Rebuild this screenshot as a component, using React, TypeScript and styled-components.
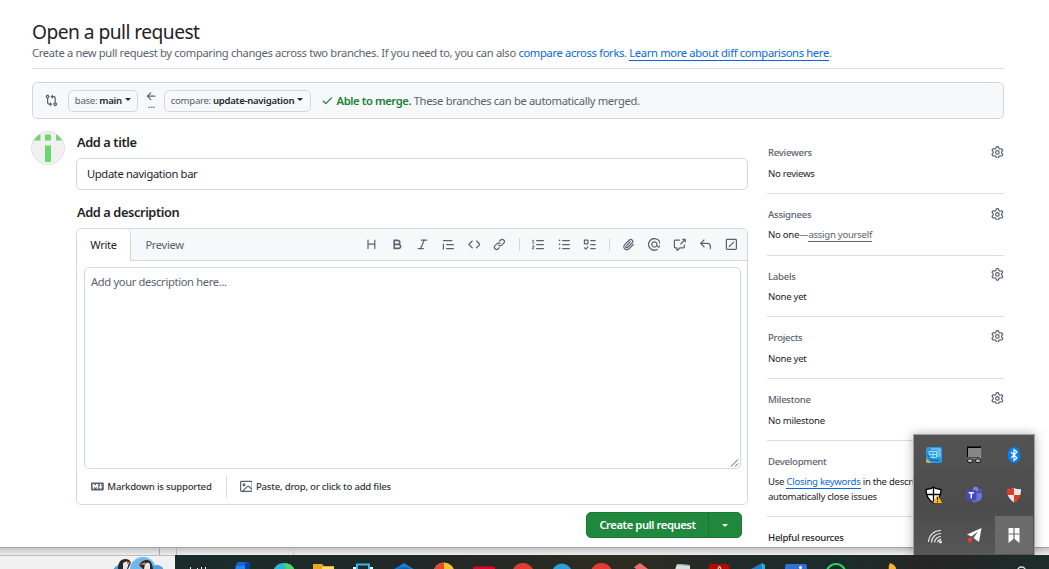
import React from 'react';
import styled, { createGlobalStyle } from 'styled-components';

const GlobalStyle = createGlobalStyle`
  *, *::before, *::after { box-sizing: border-box; }
  body {
    margin: 0;
    background: #fff;
    color: #1f2328;
    font-family: "Noto Sans", "Open Sans", sans-serif;
    font-size: 11.2px;
    letter-spacing: -0.35px;
    overflow: hidden;
  }
`;

const paths = {
  heading: 'M3.75 2a.75.75 0 0 1 .75.75V7h7V2.75a.75.75 0 0 1 1.5 0v10.5a.75.75 0 0 1-1.5 0V8.5h-7v4.75a.75.75 0 0 1-1.5 0V2.75A.75.75 0 0 1 3.75 2Z',
  bold: 'M4 2h4.5a3.501 3.501 0 0 1 2.852 5.53A3.499 3.499 0 0 1 9.5 14H4a1 1 0 0 1-1-1V3a1 1 0 0 1 1-1Zm1 7v3h4.5a1.5 1.5 0 0 0 0-3Zm3.5-2a1.5 1.5 0 0 0 0-3H5v3Z',
  italic: 'M6 2.75A.75.75 0 0 1 6.75 2h6.5a.75.75 0 0 1 0 1.5h-2.505l-3.858 9H9.25a.75.75 0 0 1 0 1.5h-6.5a.75.75 0 0 1 0-1.5h2.505l3.858-9H6.75A.75.75 0 0 1 6 2.75Z',
  quote: 'M1.75 2.5h10.5a.75.75 0 0 1 0 1.5H1.75a.75.75 0 0 1 0-1.5Zm4 5h8.5a.75.75 0 0 1 0 1.5h-8.5a.75.75 0 0 1 0-1.5Zm0 5h8.5a.75.75 0 0 1 0 1.5h-8.5a.75.75 0 0 1 0-1.5ZM2.5 7.75v6a.75.75 0 0 1-1.5 0v-6a.75.75 0 0 1 1.5 0Z',
  code: 'm11.28 3.22 4.25 4.25a.75.75 0 0 1 0 1.06l-4.25 4.25a.749.749 0 0 1-1.275-.326.749.749 0 0 1 .215-.734L13.94 8l-3.72-3.72a.749.749 0 0 1 .326-1.275.749.749 0 0 1 .734.215Zm-6.56 0a.751.751 0 0 1 1.042.018.751.751 0 0 1 .018 1.042L2.06 8l3.72 3.72a.749.749 0 0 1-.326 1.275.749.749 0 0 1-.734-.215L.47 8.53a.75.75 0 0 1 0-1.06Z',
  link: 'm7.775 3.275 1.25-1.25a3.5 3.5 0 1 1 4.95 4.95l-2.5 2.5a3.5 3.5 0 0 1-4.95 0 .751.751 0 0 1 .018-1.042.751.751 0 0 1 1.042-.018 1.998 1.998 0 0 0 2.83 0l2.5-2.5a2.002 2.002 0 0 0-2.83-2.83l-1.25 1.25a.751.751 0 0 1-1.042-.018.751.751 0 0 1-.018-1.042Zm-4.69 9.64a1.998 1.998 0 0 0 2.83 0l1.25-1.25a.751.751 0 0 1 1.042.018.751.751 0 0 1 .018 1.042l-1.25 1.25a3.5 3.5 0 1 1-4.95-4.95l2.5-2.5a3.5 3.5 0 0 1 4.95 0 .751.751 0 0 1-.018 1.042.751.751 0 0 1-1.042.018 1.998 1.998 0 0 0-2.83 0l-2.5 2.5a1.998 1.998 0 0 0 0 2.83Z',
  ordered: 'M5 3.25a.75.75 0 0 1 .75-.75h8.5a.75.75 0 0 1 0 1.5h-8.5A.75.75 0 0 1 5 3.25Zm0 5a.75.75 0 0 1 .75-.75h8.5a.75.75 0 0 1 0 1.5h-8.5A.75.75 0 0 1 5 8.25Zm0 5a.75.75 0 0 1 .75-.75h8.5a.75.75 0 0 1 0 1.5h-8.5a.75.75 0 0 1-.75-.75ZM.924 10.32a.5.5 0 0 1-.851-.525l.001-.001.001-.002.002-.004.007-.011c.097-.144.215-.273.348-.384.228-.19.588-.392 1.068-.392.468 0 .858.181 1.126.484.259.294.377.673.377 1.038 0 .987-.686 1.495-1.156 1.845l-.047.035c-.303.225-.522.4-.654.597h1.357a.5.5 0 0 1 0 1H.5a.5.5 0 0 1-.5-.5c0-1.005.692-1.52 1.167-1.875l.035-.025c.531-.396.8-.625.8-1.078a.57.57 0 0 0-.128-.376C1.806 10.068 1.695 10 1.5 10a.658.658 0 0 0-.429.163.835.835 0 0 0-.144.153ZM2.003 2.5V6h.503a.5.5 0 0 1 0 1H.5a.5.5 0 0 1 0-1h.503V3.308l-.28.14a.5.5 0 0 1-.446-.895l1.003-.5a.5.5 0 0 1 .723.447Z',
  unordered: 'M5.75 2.5h8.5a.75.75 0 0 1 0 1.5h-8.5a.75.75 0 0 1 0-1.5Zm0 5h8.5a.75.75 0 0 1 0 1.5h-8.5a.75.75 0 0 1 0-1.5Zm0 5h8.5a.75.75 0 0 1 0 1.5h-8.5a.75.75 0 0 1 0-1.5ZM2 14a1 1 0 1 1 0-2 1 1 0 0 1 0 2Zm1-6a1 1 0 1 1-2 0 1 1 0 0 1 2 0ZM2 4a1 1 0 1 1 0-2 1 1 0 0 1 0 2Z',
  tasklist: 'M2 2h4a1 1 0 0 1 1 1v4a1 1 0 0 1-1 1H2a1 1 0 0 1-1-1V3a1 1 0 0 1 1-1Zm4.655 8.595a.75.75 0 0 1 0 1.06L4.03 14.28a.75.75 0 0 1-1.06 0l-1.5-1.5a.749.749 0 0 1 .326-1.275.749.749 0 0 1 .734.215l.97.97 2.095-2.095a.75.75 0 0 1 1.06 0ZM9.75 2.5h5.5a.75.75 0 0 1 0 1.5h-5.5a.75.75 0 0 1 0-1.5Zm0 5h5.5a.75.75 0 0 1 0 1.5h-5.5a.75.75 0 0 1 0-1.5Zm0 5h5.5a.75.75 0 0 1 0 1.5h-5.5a.75.75 0 0 1 0-1.5Zm-7.25-9v3h3v-3Z',
  clip: 'M12.212 3.02a1.753 1.753 0 0 0-2.478.003l-5.83 5.83a3.007 3.007 0 0 0-.88 2.127c0 .795.315 1.551.88 2.116.567.567 1.333.89 2.126.89.79 0 1.548-.321 2.116-.89l5.48-5.48a.75.75 0 0 1 1.061 1.06l-5.48 5.48a4.492 4.492 0 0 1-3.177 1.33c-1.2 0-2.345-.487-3.187-1.33a4.483 4.483 0 0 1-1.32-3.177c0-1.195.475-2.341 1.32-3.186l5.83-5.83a3.25 3.25 0 0 1 5.553 2.297c0 .863-.343 1.691-.953 2.301L7.439 12.39c-.375.377-.884.59-1.416.593a1.998 1.998 0 0 1-1.412-.593 1.992 1.992 0 0 1 0-2.828l5.48-5.48a.751.751 0 0 1 1.042.018.751.751 0 0 1 .018 1.042l-5.48 5.48a.492.492 0 0 0 0 .707.499.499 0 0 0 .352.154.51.51 0 0 0 .356-.154l5.833-5.827a1.755 1.755 0 0 0 0-2.481Z',
  mention: 'M4.75 2.37a6.501 6.501 0 0 0 6.5 11.26.75.75 0 0 1 .75 1.298A7.999 7.999 0 0 1 .989 4.148 8 8 0 0 1 16 7.75v1.5a2.75 2.75 0 0 1-5.072 1.475 3.999 3.999 0 0 1-6.65-4.19A4 4 0 0 1 12 8v1.25a1.25 1.25 0 0 0 2.5 0V7.867a6.5 6.5 0 0 0-9.75-5.496ZM10.5 8a2.5 2.5 0 1 0-5 0 2.5 2.5 0 0 0 5 0Z',
  crossref: 'M2.75 3.5a.25.25 0 0 0-.25.25v7.5c0 .138.112.25.25.25h2a.75.75 0 0 1 .75.75v2.19l2.72-2.72a.749.749 0 0 1 .53-.22h4.5a.25.25 0 0 0 .25-.25v-2.5a.75.75 0 0 1 1.5 0v2.5A1.75 1.75 0 0 1 13.25 13H9.06l-2.573 2.573A1.458 1.458 0 0 1 4 14.543V13H2.75A1.75 1.75 0 0 1 1 11.25v-7.5C1 2.784 1.784 2 2.75 2h5.5a.75.75 0 0 1 0 1.5ZM16 1.25v4.146a.25.25 0 0 1-.427.177L14.03 4.03l-3.75 3.75a.749.749 0 0 1-1.275-.326.749.749 0 0 1 .215-.734l3.75-3.75-1.543-1.543A.25.25 0 0 1 11.604 1h4.146a.25.25 0 0 1 .25.25Z',
  reply: 'M6.78 1.97a.75.75 0 0 1 0 1.06L3.81 6h6.44A4.75 4.75 0 0 1 15 10.75v2.5a.75.75 0 0 1-1.5 0v-2.5a3.25 3.25 0 0 0-3.25-3.25H3.81l2.97 2.97a.749.749 0 0 1-.326 1.275.749.749 0 0 1-.734-.215L1.47 7.28a.75.75 0 0 1 0-1.06l4.25-4.25a.75.75 0 0 1 1.06 0Z',
  slash: 'M13.25 1c.966 0 1.75.784 1.75 1.75v10.5A1.75 1.75 0 0 1 13.25 15H2.75A1.75 1.75 0 0 1 1 13.25V2.75C1 1.784 1.784 1 2.75 1ZM2.75 2.5a.25.25 0 0 0-.25.25v10.5c0 .138.112.25.25.25h10.5a.25.25 0 0 0 .25-.25V2.75a.25.25 0 0 0-.25-.25Zm8.53 3.28-5.5 5.5a.749.749 0 0 1-1.275-.326.749.749 0 0 1 .215-.734l5.5-5.5a.749.749 0 0 1 1.06 1.06Z',
  compare: 'M9.573.677A.25.25 0 0 1 10 .854V2.5h1A2.5 2.5 0 0 1 13.5 5v5.628a2.251 2.251 0 1 1-1.5 0V5a1 1 0 0 0-1-1h-1v1.646a.25.25 0 0 1-.427.177L7.177 3.427a.25.25 0 0 1 0-.354ZM6 12v-1.646a.25.25 0 0 1 .427-.177l2.396 2.396a.25.25 0 0 1 0 .354l-2.396 2.396A.25.25 0 0 1 6 15.146V13.5H5A2.5 2.5 0 0 1 2.5 11V5.372a2.25 2.25 0 1 1 1.5 0V11a1 1 0 0 0 1 1ZM4 3.25a.75.75 0 1 0-1.5 0 .75.75 0 0 0 1.5 0ZM12.75 12a.75.75 0 1 0 0 1.5.75.75 0 0 0 0-1.5Z',
  left: 'M7.78 12.53a.75.75 0 0 1-1.06 0L2.47 8.28a.75.75 0 0 1 0-1.06l4.25-4.25a.751.751 0 0 1 1.042.018.751.751 0 0 1 .018 1.042L4.81 7h7.44a.75.75 0 0 1 0 1.5H4.81l2.97 2.97a.75.75 0 0 1 0 1.06Z',
  check: 'M13.78 4.22a.75.75 0 0 1 0 1.06l-7.25 7.25a.75.75 0 0 1-1.06 0L2.22 9.28a.751.751 0 0 1 .018-1.042.751.751 0 0 1 1.042-.018L6 10.94l6.72-6.72a.75.75 0 0 1 1.06 0Z',
  gear: 'M8 0a8.2 8.2 0 0 1 .701.031C9.444.095 9.99.645 10.16 1.29l.288 1.107c.018.066.079.158.212.224.231.114.454.243.668.386.123.082.233.09.299.071l1.103-.303c.644-.176 1.392.021 1.82.63.27.385.506.792.704 1.218.315.675.111 1.422-.364 1.891l-.814.806c-.049.048-.098.147-.088.294.016.257.016.515 0 .772-.01.147.038.246.088.294l.814.806c.475.469.679 1.216.364 1.891a7.977 7.977 0 0 1-.704 1.217c-.428.61-1.176.807-1.82.63l-1.102-.302c-.067-.019-.177-.011-.3.071a5.909 5.909 0 0 1-.668.386c-.133.066-.194.158-.211.224l-.29 1.106c-.168.646-.715 1.196-1.458 1.26a8.006 8.006 0 0 1-1.402 0c-.743-.064-1.289-.614-1.458-1.26l-.289-1.106c-.018-.066-.079-.158-.212-.224a5.738 5.738 0 0 1-.668-.386c-.123-.082-.233-.09-.299-.071l-1.103.303c-.644.176-1.392-.021-1.82-.63a8.12 8.12 0 0 1-.704-1.218c-.315-.675-.111-1.422.363-1.891l.815-.806c.05-.048.098-.147.088-.294a6.214 6.214 0 0 1 0-.772c.01-.147-.038-.246-.088-.294l-.815-.806C.635 6.045.431 5.298.746 4.623a7.92 7.92 0 0 1 .704-1.217c.428-.61 1.176-.807 1.82-.63l1.102.302c.067.019.177.011.3-.071.214-.143.437-.272.668-.386.133-.066.194-.158.211-.224l.29-1.106C6.009.645 6.556.095 7.299.03 7.53.01 7.764 0 8 0Zm-.571 1.525c-.036.003-.108.036-.137.146l-.289 1.105c-.147.561-.549.967-.998 1.189-.173.086-.34.183-.5.29-.417.278-.97.423-1.529.27l-1.103-.303c-.109-.03-.175.016-.195.045-.22.312-.412.644-.573.99-.014.031-.021.11.059.19l.815.806c.411.406.562.957.53 1.456a4.709 4.709 0 0 0 0 .582c.032.499-.119 1.05-.53 1.456l-.815.806c-.081.08-.073.159-.059.19.162.346.353.677.573.989.02.03.085.076.195.046l1.102-.303c.56-.153 1.113-.008 1.53.27.161.107.328.204.501.29.447.222.85.629.997 1.189l.289 1.105c.029.109.101.143.137.146a6.6 6.6 0 0 0 1.142 0c.036-.003.108-.036.137-.146l.289-1.105c.147-.561.549-.967.998-1.189.173-.086.34-.183.5-.29.417-.278.97-.423 1.529-.27l1.103.303c.109.029.175-.016.195-.045.22-.313.411-.644.573-.99.014-.031.021-.11-.059-.19l-.815-.806c-.411-.406-.562-.957-.53-1.456a4.709 4.709 0 0 0 0-.582c-.032-.499.119-1.05.53-1.456l.815-.806c.081-.08.073-.159.059-.19a6.464 6.464 0 0 0-.573-.989c-.02-.03-.085-.076-.195-.046l-1.102.303c-.56.153-1.113.008-1.53-.27a4.44 4.44 0 0 0-.501-.29c-.447-.222-.85-.629-.997-1.189l-.289-1.105c-.029-.11-.101-.143-.137-.146a6.6 6.6 0 0 0-1.142 0ZM11 8a3 3 0 1 1-6 0 3 3 0 0 1 6 0ZM9.5 8a1.5 1.5 0 1 0-3.001.001A1.5 1.5 0 0 0 9.5 8Z',
  markdown: 'M14.85 3c.63 0 1.15.52 1.14 1.15v7.7c0 .63-.51 1.15-1.15 1.15H1.15C.52 13 0 12.48 0 11.84V4.15C0 3.52.52 3 1.15 3ZM9 11V5H7L5.5 7 4 5H2v6h2V8l1.5 1.92L7 8v3Zm2.99.5L14.5 8H13V5h-2v3H9.5Z',
  image: 'M16 13.25A1.75 1.75 0 0 1 14.25 15H1.75A1.75 1.75 0 0 1 0 13.25V2.75C0 1.784.784 1 1.75 1h12.5c.966 0 1.75.784 1.75 1.75ZM1.75 2.5a.25.25 0 0 0-.25.25v10.5c0 .138.112.25.25.25h.94l.03-.03 6.077-6.078a1.75 1.75 0 0 1 2.412-.06L14.5 10.31V2.75a.25.25 0 0 0-.25-.25Zm12.5 11a.25.25 0 0 0 .25-.25v-.917l-4.298-3.889a.25.25 0 0 0-.344.009L4.81 13.5ZM7 6a2 2 0 1 1-3.999.001A2 2 0 0 1 7 6ZM5.5 6a.5.5 0 1 0-1 0 .5.5 0 0 0 1 0Z',
};

type IconName = keyof typeof paths;

const Svg = styled.svg`
  display: block;
  flex: none;
  fill: currentColor;
`;

const Icon = ({ name, size = 12.8 }: { name: IconName; size?: number }) => (
  <Svg width={size} height={size} viewBox="0 0 16 16">
    <path d={paths[name]} />
  </Svg>
);

const Screen = styled.div`
  position: relative;
  display: flex;
  flex-direction: column;
  width: 1049px;
  height: 569px;
  overflow: hidden;
`;

const Page = styled.main`
  height: 547px;
  padding: 20px 45px 0 32px;
  overflow: hidden;
  white-space: nowrap;
`;

const Header = styled.header`
  height: 49px;
  border-bottom: 1px solid #d8dee4;
`;

const PageTitle = styled.h1`
  margin: 0;
  font-size: 19.2px;
  font-weight: 400;
  line-height: 24px;
  letter-spacing: -0.54px;
`;

const Subtitle = styled.p`
  margin: 1px 0 0;
  color: #59636e;
  line-height: 16px;
  letter-spacing: -0.337px;
`;

const Link = styled.a<{ $underlined?: boolean; $muted?: boolean }>`
  color: ${(p) => (p.$muted ? '#59636e' : '#0969da')};
  border-bottom: ${(p) => (p.$underlined ? '1px solid currentColor' : '0')};
`;

const MergeBar = styled.section`
  display: flex;
  align-items: center;
  width: 972px;
  height: 37px;
  margin-top: 13px;
  padding-left: 12px;
  border: 1px solid #d1d9e0;
  border-radius: 5px;
  background: #f6f8fa;
  color: #59636e;
`;

const BranchButton = styled.button<{ $width: number }>`
  display: flex;
  align-items: center;
  width: ${(p) => p.$width}px;
  height: 22px;
  padding: 0 0 0 6px;
  border: 1px solid #d1d9e0;
  border-radius: 5px;
  background: #f6f8fa;
  color: #59636e;
  font-family: inherit;
  font-size: 9.6px;
  letter-spacing: -0.3px;
  white-space: pre;

  b {
    color: #25292e;
    font-weight: 600;
  }
`;

const Caret = styled.i<{ $light?: boolean }>`
  width: 0;
  height: 0;
  margin: -2px 0 0 3px;
  border: 3.4px solid transparent;
  border-top-color: ${(p) => (p.$light ? '#fff' : '#25292e')};
  border-bottom: 0;
`;

const CompareIcon = styled.span`
  margin: 0 10px 0 0;
`;

const Direction = styled.span`
  display: flex;
  flex-direction: column;
  align-items: center;
  width: 26px;
  height: 22px;
  padding-left: 1px;
`;

const Dots = styled.span`
  height: 8px;
  font-size: 9.6px;
  font-weight: 600;
  line-height: 6px;
`;

const MergeStatus = styled.p`
  display: flex;
  align-items: center;
  gap: 3px;
  margin: 0 0 0 10px;

  svg { color: #1a7f37; }

  b {
    color: #1a7f37;
    font-weight: 600;
    letter-spacing: -0.4px;
  }
`;

const Columns = styled.div`
  display: flex;
`;

const Avatar = styled.div`
  width: 34px;
  height: 34px;
  margin: 12px 11px 0 -1px;
  border: 1px solid #dfe2e5;
  border-radius: 50%;
  background: #f0f0f0;
  overflow: hidden;
`;

const Form = styled.form`
  width: 672px;
  padding-top: 15px;
`;

const FieldLabel = styled.h2`
  margin: 0;
  padding-left: 1px;
  font-size: 12.8px;
  font-weight: 600;
  line-height: 17px;
  letter-spacing: -0.4px;
`;

const TitleInput = styled.div`
  height: 32px;
  margin: 7px 0 14px;
  padding-left: 10px;
  border: 1px solid #d1d9e0;
  border-radius: 5px;
  line-height: 29px;
`;

const Editor = styled.section`
  display: flex;
  flex-direction: column;
  height: 277px;
  margin-top: 7px;
  border: 1px solid #d1d9e0;
  border-radius: 5px;
  overflow: hidden;
`;

const EditorHead = styled.div`
  display: flex;
  height: 32px;
  border-bottom: 1px solid #d1d9e0;
  background: #f6f8fa;
  color: #59636e;
`;

const Tab = styled.div<{ $active?: boolean }>`
  width: ${(p) => (p.$active ? 54 : 67)}px;
  height: ${(p) => (p.$active ? 32 : 31)}px;
  border-right: ${(p) => (p.$active ? '1px solid #d1d9e0' : '0')};
  border-radius: 5px 5px 0 0;
  background: ${(p) => (p.$active ? '#fff' : 'transparent')};
  color: ${(p) => (p.$active ? '#1f2328' : '#59636e')};
  line-height: 31px;
  text-align: center;
`;

const Toolbar = styled.div`
  display: flex;
  align-items: center;
  margin-left: auto;
  padding-right: 3px;
`;

const Tool = styled.span`
  display: grid;
  place-items: center;
  width: 25.7px;
`;

const ToolDivider = styled.span`
  width: 1px;
  height: 13px;
  margin: 0 6px;
  background: #d1d9e0;
`;

const TextArea = styled.div`
  display: flex;
  justify-content: space-between;
  height: 202px;
  margin: 6px 6px 0 7px;
  padding: 6px 1px 1px 6px;
  border: 1px solid #d1d9e0;
  border-radius: 5px;
  color: #59636e;
  line-height: 16px;
`;

const Grip = styled.svg`
  align-self: flex-end;
  display: block;
`;

const EditorFoot = styled.div`
  display: flex;
  align-items: center;
  flex: 1;
  padding-left: 14px;
  color: #59636e;
  font-size: 9.6px;
  font-weight: 500;
  letter-spacing: -0.22px;
`;

const FootItem = styled.span`
  display: flex;
  align-items: center;
  gap: 3.5px;

  span { color: #30363d; }
`;

const FootDivider = styled.span`
  width: 1px;
  height: 23px;
  margin: 0 13px 0 14px;
  background: #d8dee4;
`;

const Actions = styled.div`
  display: flex;
  justify-content: flex-end;
  padding: 7px 6px 0 0;
`;

const SubmitButton = styled.div`
  display: flex;
  width: 156px;
  height: 26px;
  border: 1px solid #1c7a35;
  border-radius: 5px;
  background: #1f883d;
  color: #fff;
  font-weight: 600;
  line-height: 24px;
  letter-spacing: -0.42px;
`;

const SubmitLabel = styled.span`
  width: 122px;
  border-right: 1px solid #1a7232;
  text-align: center;
`;

const SubmitMenu = styled.span`
  display: grid;
  flex: 1;
  place-items: center;
  padding: 2px 3px 0 0;
`;

const Sidebar = styled.aside`
  width: 237px;
  margin-left: 19px;
  padding-top: 13px;
  font-size: 9.6px;
  letter-spacing: -0.28px;
`;

const SideSection = styled.section<{ $height: number }>`
  height: ${(p) => p.$height}px;
  padding-top: 12px;
  padding-left: 1px;
  border-bottom: 1px solid #d8dee4;
`;

const SideHead = styled.div<{ $dark?: boolean; $gap?: number }>`
  display: flex;
  justify-content: space-between;
  height: 15px;
  margin-bottom: ${(p) => p.$gap ?? 6}px;
  color: ${(p) => (p.$dark ? '#1f2328' : '#59636e')};
  font-weight: 500;
  line-height: 17px;
`;

const GearSlot = styled.span<{ $drop: number }>`
  height: 13px;
  padding-top: ${(p) => p.$drop}px;
`;

const SideText = styled.div`
  height: 15px;
  line-height: 15px;
`;

const Behind = styled.div`
  display: flex;
  height: 8px;
  border-top: 1px solid #a3a3a3;
  background: linear-gradient(#c4c4c4, #eeeeee);
`;

const Seam = styled.i<{ $gap: number; $tone: string }>`
  width: 1px;
  margin-left: ${(p) => p.$gap}px;
  background: ${(p) => p.$tone};
`;

const Taskbar = styled.footer`
  display: flex;
  height: 14px;
  overflow: hidden;
  background: linear-gradient(90deg, #1b2b2b 0 20%, #222827 42%, #2d2c20 60%, #222a28 70%, #1b2c2b 80%, #272525 88%, #1c2c2b);
`;

const SearchBox = styled.div`
  width: 175px;
  border-top: 1px solid #bdbdbd;
  background: #f1f1f1;
`;

const TaskIcon = styled.svg`
  display: block;
  flex: none;
`;

const Tray = styled.div`
  position: absolute;
  top: 434px;
  left: 913px;
  width: 122px;
  height: 121px;
  display: grid;
  grid-template: repeat(3, 40px) / repeat(3, 40px);
  border: 1px solid #a0a0a0;
  border-bottom: 0;
  background: linear-gradient(#535353, #4c4c4c 60%, #575757);
  box-shadow: 0 0 10px rgba(0, 0, 0, 0.3);
  clip-path: inset(-14px -14px 0 -14px);
`;

const TrayCell = styled.div<{ $active?: boolean }>`
  display: grid;
  place-items: center;
  width: ${(p) => (p.$active ? 38 : 40)}px;
  height: ${(p) => (p.$active ? 38 : 40)}px;
  margin: ${(p) => (p.$active ? '1px' : '0')};
  background: ${(p) => (p.$active ? '#6b6b6b' : 'transparent')};
`;

const tools: (IconName | '|')[] = [
  'heading', 'bold', 'italic', 'quote', 'code', 'link', '|',
  'ordered', 'unordered', 'tasklist', '|',
  'clip', 'mention', 'crossref', 'reply', 'slash',
];

const sections: { title: string; body: React.ReactNode; height: number; gap: number; drop: number }[] = [
  { title: 'Reviewers', body: 'No reviews', height: 62, gap: 7, drop: 1.6 },
  { title: 'Assignees', body: <>No one—<Link $underlined $muted>assign yourself</Link></>, height: 62, gap: 6, drop: 1.6 },
  { title: 'Labels', body: 'None yet', height: 61, gap: 6, drop: 0 },
  { title: 'Projects', body: 'None yet', height: 62, gap: 7, drop: 0.6 },
  { title: 'Milestone', body: 'No milestone', height: 62, gap: 7, drop: 0.6 },
];

const taskIcons: React.ReactNode[] = [
  <><path d="M10 14q1-7 4-7h11v7z" fill="#1267d8" /><path d="M20 8l5-1v7h-5z" fill="#0a3d9e" /><path d="M11 11h9v4h-9z" fill="#2386f0" /></>,
  <><circle cx="19.7" cy="19" r="11" fill="#2bb6d8" /><path d="M20 8q9 0 11 8h-9z" fill="#4fd06a" /></>,
  <><path d="M9 9h9l2 2h10v5H9z" fill="#e8a91c" /><path d="M18 12h12v4H18z" fill="#f9d978" /></>,
  <><path d="M10 12h20v4H10z" fill="#e8f2f8" /><path d="M14 14V9.500h12V14" fill="#1d2b2c" stroke="#35b7ef" strokeWidth="2" /></>,
  <><path d="M10 15l11-7 11 7z" fill="#1283d9" /><path d="M10 13l12-1 9 3z" fill="#0a5fb4" /></>,
  <><circle cx="22" cy="18" r="10.5" fill="#f4c32d" /><path d="M22 7.500v10.500H11.500A10.500 10.500 0 0 1 22 7.500" fill="#e5492f" /></>,
  <rect x="12" y="11.500" width="22" height="6" rx="1.500" fill="#e4002b" />,
  <circle cx="22" cy="19" r="11" fill="#e23c2e" />,
  <circle cx="22" cy="18.500" r="10" fill="#2b9fdb" />,
  <circle cx="21.500" cy="19" r="11" fill="#e23c2e" />,
  <path d="M15 12l6-4 8 6H17z" fill="#f06a6f" />,
  <><path d="M19 9l13 1v5H17z" fill="#d6dfe0" /><path d="M19 9l13 1v1l-13-1z" fill="#8ba8b1" /></>,
  <><rect x="10.500" y="9" width="21" height="9" rx="3" fill="#b30b00" /><path d="M20 14l1.500-3 1.500 3" stroke="#fff" fill="none" /></>,
  <><path d="M14 14l11-6v7z" fill="#1b7fc4" /><path d="M25 8l3 2v5h-3z" fill="#2fa8ec" /></>,
  <><rect x="9" y="9" width="22" height="8" rx="2" fill="#2f6fd6" /><circle cx="24.500" cy="12.500" r="1.500" fill="#fff" /></>,
  <circle cx="20" cy="18.500" r="9.500" fill="none" stroke="#25d366" strokeWidth="2.200" />,
];

const trayIcons: React.ReactNode[] = [
  <><rect x="2" y="2" width="16" height="16" rx="2" fill="#2a9ae0" /><path d="M7 4h9v8M5 6.500h7.500v6H5zM9 6v7M5 9.500h7.500M14 5v7" fill="none" stroke="#a8dcf8" /><path d="M3.500 9l3 6 9 .5" fill="none" stroke="#0b6fb8" strokeWidth="1.500" /><path d="M2 13.500l6 4.500H4q-2 0-2-2z" fill="#b9b06a" /></>,
  <><path d="M3.500 2.500h13v10h-13z" fill="#868686" stroke="#000" /><path d="M3 2h14" stroke="#000" /><path d="M16.600 3v10H3.500" fill="none" stroke="#ddd" strokeWidth=".7" /><rect x="3.500" y="14" width="5" height="3.500" rx="1.500" fill="#b8b8b8" stroke="#000" strokeWidth=".8" /><rect x="11.500" y="14" width="5" height="3.500" rx="1.500" fill="#b8b8b8" stroke="#000" strokeWidth=".8" /></>,
  <><rect x="4" y="2" width="12" height="16" rx="6" fill="#0a7cf2" /><path d="M7 7l6 6-3 2.500v-11L13 7l-6 6" fill="none" stroke="#fff" strokeWidth="1.200" /></>,
  <><path d="M9.500 2l2 1.500 5.500 1q0 9-7.500 13.500Q2 13.500 2 4.500l5.500-1z" fill="#fff" stroke="#000" strokeWidth="1.300" /><path d="M9.500 2v16M2 9.500h15" stroke="#000" strokeWidth="1.300" /><path d="M13.500 9.500l4.500 8.500H9z" fill="#fdb913" /><path d="M13.500 12v3M13.500 16v1.200" stroke="#222" strokeWidth="1.100" /></>,
  <><circle cx="11.500" cy="4.500" r="2.700" fill="#7b83eb" /><circle cx="16" cy="5.500" r="2" fill="#5059c9" /><path d="M7 8h11v4q-1 4-4 4-2 2-5 1-2-1-2-4z" fill="#6b73dd" /><rect x="2" y="5" width="10.500" height="10.500" rx="1" fill="#434bb8" /><path d="M4.700 7.700h5.200M7.300 7.700v5.500" stroke="#fff" strokeWidth="1.400" /></>,
  <><path d="M10 3q3 1.500 7 1 .5 9-7 13.500Q2.500 13 3 4q4 .5 7-1" fill="#e9e9e9" /><path d="M10 3v7H3.200Q2.800 7 3 4q4 .5 7-1M10 10h6.800q-1.300 5-6.800 7.500z" fill="#dd3b24" /></>,
  <g fill="none" stroke="#e8e8e8" strokeWidth="1.200"><path d="M4.500 17A12 12 0 0 1 17 5.500M7.500 17.500A9 9 0 0 1 17 8.500M10.500 17.500a6.500 6.500 0 0 1 6.500-6M13.500 17.500a4 4 0 0 1 3.500-3.200" /><circle cx="16.500" cy="17" r=".8" fill="#fff" /></g>,
  <><path d="M17.500 3L3 9.500l4.500 2L14 6.500 9.500 13l5.500 4z" fill="#fff" /><circle cx="6" cy="15" r="2.300" fill="#ee3a34" /></>,
  <><path d="M4.500 3h11v15L10 13.500 4.500 18z" fill="#fff" /><path d="M10 3v11M4.500 9h11" stroke="#6b6b6b" strokeWidth="1.200" /></>,
];

export default function App() {
  return (
    <>
      <GlobalStyle />
      <Screen>
        <Page>
          <Header>
            <PageTitle>Open a pull request</PageTitle>
            <Subtitle>
              Create a new pull request by comparing changes across two branches. If you need to, you can also{' '}
              <Link>compare across forks</Link>. <Link $underlined>Learn more about diff comparisons here</Link>.
            </Subtitle>
          </Header>

          <MergeBar>
            <CompareIcon><Icon name="compare" /></CompareIcon>
            <BranchButton $width={70}>base: <b>main</b><Caret /></BranchButton>
            <Direction><Icon name="left" /><Dots>...</Dots></Direction>
            <BranchButton $width={147}>compare: <b>update-navigation</b><Caret /></BranchButton>
            <MergeStatus>
              <Icon name="check" />
              <span><b>Able to merge.</b> These branches can be automatically merged.</span>
            </MergeStatus>
          </MergeBar>

          <Columns>
            <Avatar>
              <svg width="32" height="32" viewBox="0 0 32 32" fill="#6bd76e">
                <path d="M0 2.500h8.500v6H0zM13 2.500h6v6h-6zM24 2.500h8v6h-8zM13 13.500h6V30h-6z" />
              </svg>
            </Avatar>
            <Form>
              <FieldLabel>Add a title</FieldLabel>
              <TitleInput>Update navigation bar</TitleInput>
              <FieldLabel>Add a description</FieldLabel>
              <Editor>
                <EditorHead>
                  <Tab $active>Write</Tab>
                  <Tab>Preview</Tab>
                  <Toolbar>
                    {tools.map((t, i) =>
                      t === '|' ? <ToolDivider key={i} /> : <Tool key={i}><Icon name={t} /></Tool>,
                    )}
                  </Toolbar>
                </EditorHead>
                <TextArea>
                  Add your description here...
                  <Grip width="9" height="9" viewBox="0 0 9 9" stroke="#555" fill="none">
                    <path d="M1 8.500l7-7M5 8.500L8 5.500" />
                  </Grip>
                </TextArea>
                <EditorFoot>
                  <FootItem><Icon name="markdown" /><span>Markdown is supported</span></FootItem>
                  <FootDivider />
                  <FootItem><Icon name="image" /><span>Paste, drop, or click to add files</span></FootItem>
                </EditorFoot>
              </Editor>
              <Actions>
                <SubmitButton>
                  <SubmitLabel>Create pull request</SubmitLabel>
                  <SubmitMenu><Caret $light /></SubmitMenu>
                </SubmitButton>
              </Actions>
            </Form>
            <Sidebar>
              {sections.map((s) => (
                <SideSection key={s.title} $height={s.height}>
                  <SideHead $gap={s.gap}>
                    {s.title}
                    <GearSlot $drop={s.drop}><Icon name="gear" /></GearSlot>
                  </SideHead>
                  <SideText>{s.body}</SideText>
                </SideSection>
              ))}
              <SideSection $height={76}>
                <SideHead>Development</SideHead>
                <SideText>Use <Link $underlined>Closing keywords</Link> in the description to</SideText>
                <SideText>automatically close issues</SideText>
              </SideSection>
              <SideSection $height={40}>
                <SideHead $dark>Helpful resources</SideHead>
              </SideSection>
            </Sidebar>
          </Columns>
        </Page>

        <Behind>
          <Seam $gap={159} $tone="#a0a0a0" />
          <Seam $gap={16} $tone="#a9b8c4" />
          <Seam $gap={116} $tone="#c8c8c8" />
        </Behind>
        <Taskbar>
          <SearchBox>
            <TaskIcon width="175" height="13" viewBox="0 0 175 13">
              <circle cx="143" cy="14" r="13" fill="#6db9ee" />
              <circle cx="120" cy="16" r="7" fill="#4f9fdc" />
              <circle cx="157" cy="16" r="7" fill="#4f9fdc" />
              <path d="M118 13q0-10 7-10 5 0 6 4l-3 6z" fill="#26262c" />
              <path d="M139 9q3-5 8-5 5 0 6 9h-10z" fill="#26262c" />
              <path d="M123 7q4-3 6 0l-2 6h-4zM145 8q3-3 5 0v5h-6z" fill="#e8e4e0" />
              <path d="M127 5.500l5 1.500-5 1zM145 6l-6 2.500 6 .5z" fill="#e2703c" />
            </TaskIcon>
          </SearchBox>
          <TaskIcon width="50" height="14" viewBox="0 0 50 14" fill="#f0f0f0">
            <path d="M15 12h1v2h-1zM22 13h1v1h-1zM26 12h1v2h-1zM30 12h1v2h-1z" />
          </TaskIcon>
          {taskIcons.map((art, i) => (
            <TaskIcon key={i} width="39.4" height="14" viewBox="0 0 39.4 14">{art}</TaskIcon>
          ))}
          <TaskIcon width="194" height="14" viewBox="0 0 194 14">
            <path d="M34 15q-1-3 1-7 7 3 6 7z" fill="#f7b32b" />
            <circle cx="166.500" cy="16" r="4" fill="none" stroke="#ddd" strokeWidth="1.500" />
          </TaskIcon>
        </Taskbar>

        <Tray>
          {trayIcons.map((art, i) => (
            <TrayCell key={i} $active={i === 8}>
              <Svg width="20" height="20" viewBox="0 0 20 20">{art}</Svg>
            </TrayCell>
          ))}
        </Tray>
      </Screen>
    </>
  );
}
